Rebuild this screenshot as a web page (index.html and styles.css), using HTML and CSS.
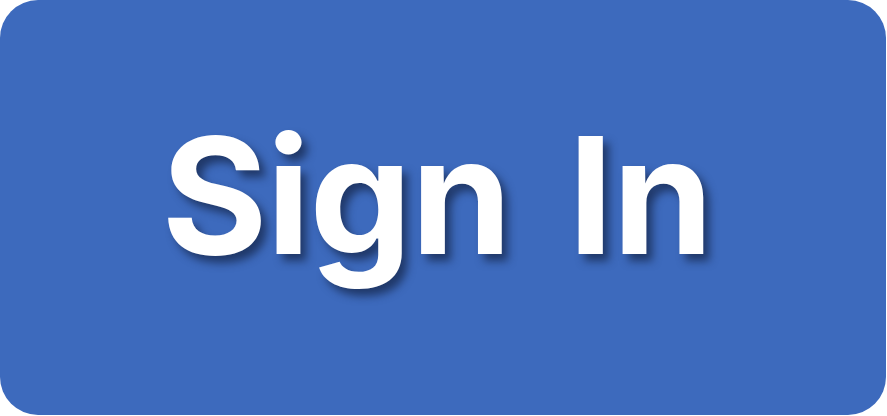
FILE: index.html
```html
<!DOCTYPE html>
<html>
<head>
<meta charset="utf-8">
<link rel="stylesheet" href="styles.css">
</head>
<body>
<div class="page">
  <button class="signin">Sign In</button>
</div>
</body>
</html>
```
FILE: styles.css
```css
html, body {
  margin: 0;
  padding: 0;
  background: #ffffff;
}
.page {
  width: 887px;
  height: 416px;
  display: flex;
}
.signin {
  width: 886px;
  height: 415px;
  border: none;
  border-radius: 38px;
  background: #3d6abd;
  color: #ffffff;
  font-family: "Inter", "DejaVu Sans", sans-serif;
  font-weight: 700;
  font-size: 162px;
  line-height: 1;
  letter-spacing: -1px;
  word-spacing: 20px;
  padding: 0 12px 26px 0;
  margin: 0;
  display: flex;
  align-items: center;
  justify-content: center;
  text-shadow: 6px 7px 9px rgba(20, 35, 70, 0.7);
}
```
